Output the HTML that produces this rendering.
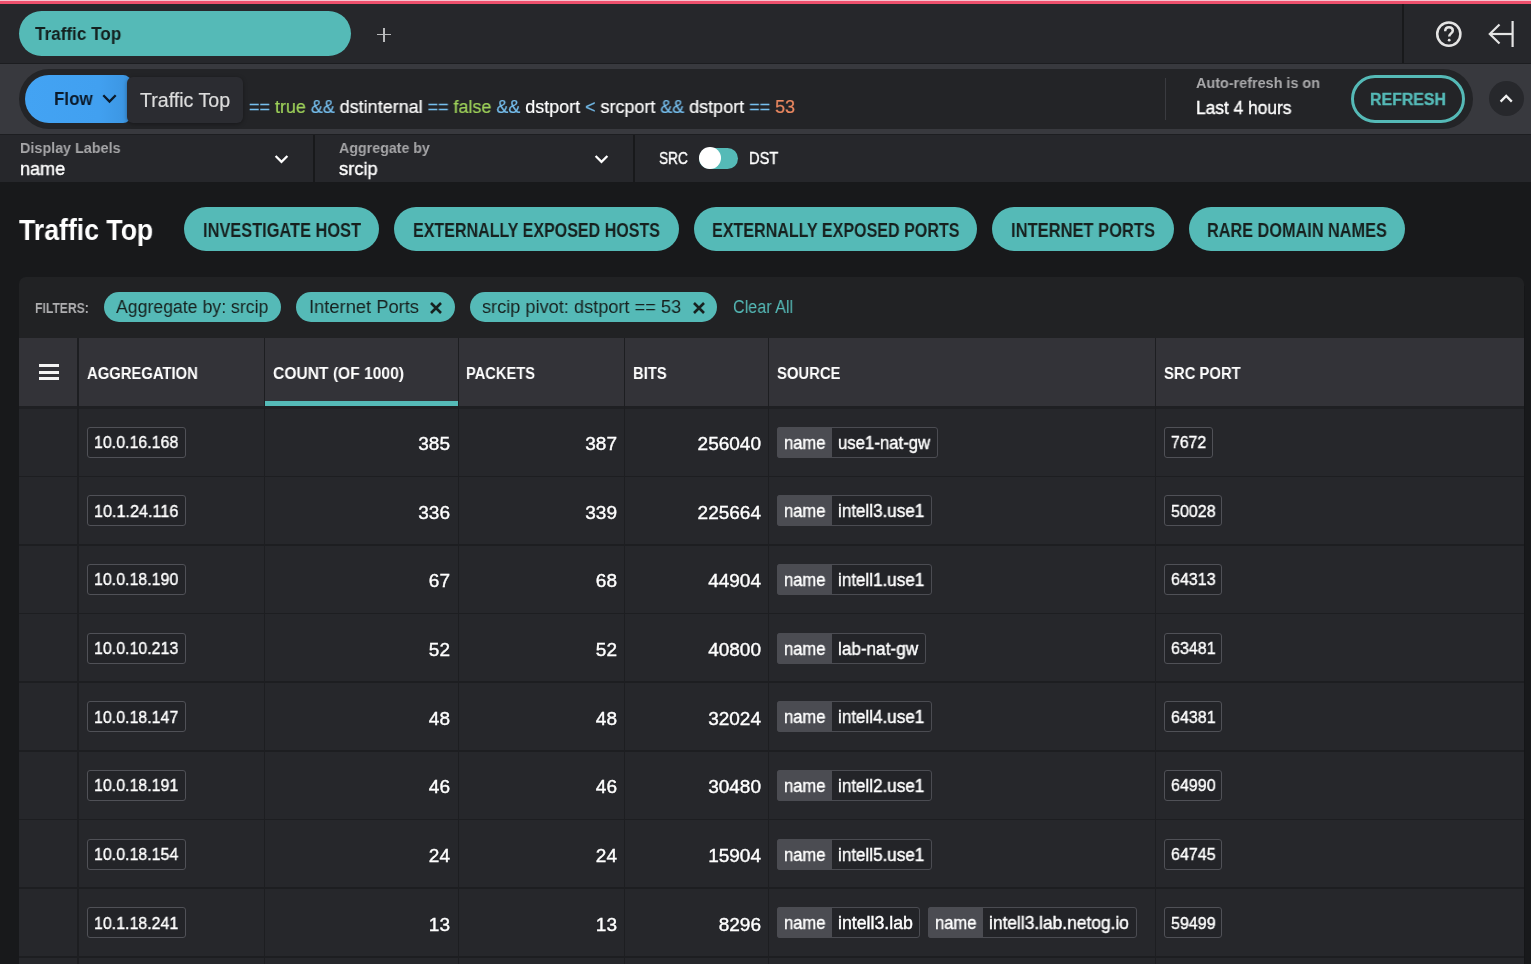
<!DOCTYPE html>
<html><head><meta charset="utf-8"><style>*{margin:0;padding:0}
html,body{width:1531px;height:964px;overflow:hidden;background:#18191b;font-family:"Liberation Sans", sans-serif}
.r{position:absolute;display:block}
.t{position:absolute;white-space:nowrap;line-height:1;transform-origin:0 0;will-change:transform}
.sb{-webkit-text-stroke:0.4px currentColor}
.sl{-webkit-text-stroke:0.2px currentColor}
</style></head><body>
<div class="r" style="left:0px;top:0px;width:1531px;height:62.5px;background:#26272b;"></div>
<div class="r" style="left:0px;top:0px;width:1531px;height:1.2px;background:#f7c3cf;"></div>
<div class="r" style="left:0px;top:1.2px;width:1531px;height:2.8px;background:#ee506d;"></div>
<div class="r" style="left:0px;top:62.5px;width:1531px;height:1.5px;background:#1c1d20;"></div>
<div class="r" style="left:1401.9px;top:4px;width:1.9px;height:58.5px;background:#18191b;"></div>
<div class="r" style="left:18.6px;top:10.7px;width:332.4px;height:45.3px;background:#55bab7;border-radius:23px;"></div>
<div class="r" style="left:377px;top:33.9px;width:13.5px;height:1.6px;background:#b9babc;"></div>
<div class="r" style="left:382.95px;top:28px;width:1.6px;height:13.6px;background:#b9babc;"></div>
<svg class="r" style="left:1434px;top:19px" width="30" height="30" viewBox="0 0 30 30"><circle cx="14.8" cy="15.1" r="11.6" fill="none" stroke="#e4e4e4" stroke-width="2.5"/><path d="M11.2 12.2 C11.2 9.6 13 8.3 15 8.3 C17.1 8.3 18.8 9.6 18.8 11.7 C18.8 14.2 15.2 14.6 15.2 17.4" fill="none" stroke="#e4e4e4" stroke-width="2.5" stroke-linecap="butt"/><circle cx="15.2" cy="21.2" r="1.4" fill="#e4e4e4"/></svg>
<svg class="r" style="left:1484px;top:18px" width="34" height="32" viewBox="0 0 34 32"><path d="M28.6 3 V29" stroke="#e4e4e4" stroke-width="2.2" fill="none"/><path d="M28 16 H6.5" stroke="#e4e4e4" stroke-width="2.2" fill="none"/><path d="M15.5 6.5 L5.8 16 L15.5 25.5" stroke="#e4e4e4" stroke-width="2.2" fill="none" stroke-linejoin="miter"/></svg>
<div class="r" style="left:0px;top:64px;width:1531px;height:70px;background:#38393e;"></div>
<div class="r" style="left:0px;top:134px;width:1531px;height:1.2px;background:#1d1e21;"></div>
<div class="r" style="left:19px;top:69px;width:1454px;height:60px;background:#232427;border-radius:30px;"></div>
<div class="r" style="left:24.7px;top:74.7px;width:106px;height:48.6px;background:linear-gradient(90deg,#43a3f3 0%,#41a0f0 70%,#3b94e0 100%);border-radius:24.3px 8px 8px 24.3px;"></div>
<svg class="r" style="left:100px;top:92px" width="20" height="14" viewBox="0 0 20 14"><path d="M3.3 3.3 L9.5 9.6 L15.7 3.3" stroke="#0b1a2a" stroke-width="2.3" fill="none"/></svg>
<div class="r" style="left:126.9px;top:77.3px;width:115.9px;height:45.5px;background:#2b2c31;border-radius:6px;box-shadow:0 1px 4px rgba(0,0,0,0.35);"></div>
<div class="r" style="left:1165px;top:78px;width:1.2px;height:42px;background:#3a3b40;"></div>
<div class="r" style="left:1350.9px;top:74.7px;width:114.3px;height:48.5px;background:transparent;border:3px solid #55bab7;border-radius:25px;box-sizing:border-box;"></div>
<div class="r" style="left:1488.6px;top:81.1px;width:35.2px;height:35.2px;background:#27282c;border-radius:50%;"></div>
<svg class="r" style="left:1496px;top:90px" width="20" height="16" viewBox="0 0 20 16"><path d="M4.6 11.6 L10.2 6 L15.8 11.6" stroke="#f0f0f0" stroke-width="2.3" fill="none"/></svg>
<div class="r" style="left:0px;top:135.2px;width:1531px;height:46.6px;background:#26272b;"></div>
<div class="r" style="left:313.1px;top:135.2px;width:1.6px;height:46.6px;background:#18191b;"></div>
<div class="r" style="left:633.1px;top:135.2px;width:1.6px;height:46.6px;background:#18191b;"></div>
<svg class="r" style="left:274.2px;top:151.5px" width="16" height="14" viewBox="0 0 16 14"><path d="M1.6 4 L7.5 9.9 L13.4 4" stroke="#ffffff" stroke-width="2.3" fill="none"/></svg>
<svg class="r" style="left:594.2px;top:151.5px" width="16" height="14" viewBox="0 0 16 14"><path d="M1.6 4 L7.5 9.9 L13.4 4" stroke="#ffffff" stroke-width="2.3" fill="none"/></svg>
<div class="r" style="left:699px;top:147.9px;width:39px;height:21.1px;background:#55bab7;border-radius:11px;"></div>
<div class="r" style="left:698.8px;top:147.1px;width:21.8px;height:21.8px;background:#ffffff;border-radius:50%;"></div>
<div class="r" style="left:184.1px;top:207.3px;width:194.7px;height:44.1px;background:#55bab7;border-radius:22px;"></div>
<div class="r" style="left:394px;top:207.3px;width:284.6px;height:44.1px;background:#55bab7;border-radius:22px;"></div>
<div class="r" style="left:693.5px;top:207.3px;width:283.3px;height:44.1px;background:#55bab7;border-radius:22px;"></div>
<div class="r" style="left:991.7px;top:207.3px;width:182.3px;height:44.1px;background:#55bab7;border-radius:22px;"></div>
<div class="r" style="left:1189px;top:207.3px;width:216px;height:44.1px;background:#55bab7;border-radius:22px;"></div>
<div class="r" style="left:19px;top:277px;width:1505px;height:700px;background:#212224;border-radius:7px 7px 0 0;"></div>
<div class="r" style="left:1523.6px;top:286px;width:1.4px;height:700px;background:#151618;"></div>
<div class="r" style="left:104px;top:292.2px;width:176.8px;height:29.6px;background:#55bab7;border-radius:15px;"></div>
<div class="r" style="left:296px;top:292.2px;width:158.9px;height:29.6px;background:#55bab7;border-radius:15px;"></div>
<svg class="r" style="left:429px;top:300.5px" width="14" height="14" viewBox="0 0 14 14"><path d="M2 2 L12 12 M12 2 L2 12" stroke="#17211f" stroke-width="2.6" fill="none"/></svg>
<div class="r" style="left:469.8px;top:292.2px;width:247.4px;height:29.6px;background:#55bab7;border-radius:15px;"></div>
<svg class="r" style="left:692.2px;top:300.5px" width="14" height="14" viewBox="0 0 14 14"><path d="M2 2 L12 12 M12 2 L2 12" stroke="#17211f" stroke-width="2.6" fill="none"/></svg>
<div class="r" style="left:19px;top:338px;width:1505px;height:68px;background:#333338;"></div>
<div class="r" style="left:19px;top:406px;width:1505px;height:2.8px;background:#1f2023;"></div>
<div class="r" style="left:264.9px;top:401.3px;width:192.8px;height:4.7px;background:#55bab7;"></div>
<div class="r" style="left:39.4px;top:363.9px;width:19.5px;height:3.1px;background:#f4f4f4;"></div>
<div class="r" style="left:39.4px;top:370.6px;width:19.5px;height:3.1px;background:#f4f4f4;"></div>
<div class="r" style="left:39.4px;top:377.2px;width:19.5px;height:3.1px;background:#f4f4f4;"></div>
<div class="r" style="left:19px;top:408.8px;width:1505px;height:600px;background:#26272b;"></div>
<div class="r" style="left:19px;top:475.5px;width:1505px;height:1.6px;background:#1d1e21;"></div>
<div class="r" style="left:19px;top:544.16px;width:1505px;height:1.6px;background:#1d1e21;"></div>
<div class="r" style="left:19px;top:612.82px;width:1505px;height:1.6px;background:#1d1e21;"></div>
<div class="r" style="left:19px;top:681.48px;width:1505px;height:1.6px;background:#1d1e21;"></div>
<div class="r" style="left:19px;top:750.14px;width:1505px;height:1.6px;background:#1d1e21;"></div>
<div class="r" style="left:19px;top:818.8px;width:1505px;height:1.6px;background:#1d1e21;"></div>
<div class="r" style="left:19px;top:887.46px;width:1505px;height:1.6px;background:#1d1e21;"></div>
<div class="r" style="left:19px;top:956.12px;width:1505px;height:1.6px;background:#1d1e21;"></div>
<div class="r" style="left:77.25px;top:338px;width:1.5px;height:626px;background:#1d1e21;"></div>
<div class="r" style="left:263.65px;top:338px;width:1.5px;height:626px;background:#1d1e21;"></div>
<div class="r" style="left:457.55px;top:338px;width:1.5px;height:626px;background:#1d1e21;"></div>
<div class="r" style="left:623.85px;top:338px;width:1.5px;height:626px;background:#1d1e21;"></div>
<div class="r" style="left:767.75px;top:338px;width:1.5px;height:626px;background:#1d1e21;"></div>
<div class="r" style="left:1154.55px;top:338px;width:1.5px;height:626px;background:#1d1e21;"></div>
<div class="r" style="left:87.2px;top:426.8px;width:98.8px;height:31px;background:#232428;border:1px solid #505157;border-radius:3px;box-sizing:border-box;"></div>
<div class="r" style="left:776.8px;top:426.8px;width:161.0px;height:30.8px;background:#232428;border:1px solid #4b4c52;border-radius:3px;box-sizing:border-box;"></div>
<div class="r" style="left:776.8px;top:426.8px;width:54.9px;height:30.8px;background:#4b4c52;border-radius:3px 0 0 3px;"></div>
<div class="r" style="left:1164.4px;top:426.8px;width:48.5px;height:31px;background:#232428;border:1px solid #505157;border-radius:3px;box-sizing:border-box;"></div>
<div class="r" style="left:87.2px;top:495.47px;width:98.8px;height:31px;background:#232428;border:1px solid #505157;border-radius:3px;box-sizing:border-box;"></div>
<div class="r" style="left:776.8px;top:495.47px;width:155.0px;height:30.8px;background:#232428;border:1px solid #4b4c52;border-radius:3px;box-sizing:border-box;"></div>
<div class="r" style="left:776.8px;top:495.47px;width:54.9px;height:30.8px;background:#4b4c52;border-radius:3px 0 0 3px;"></div>
<div class="r" style="left:1164.4px;top:495.47px;width:57.9px;height:31px;background:#232428;border:1px solid #505157;border-radius:3px;box-sizing:border-box;"></div>
<div class="r" style="left:87.2px;top:564.14px;width:98.8px;height:31px;background:#232428;border:1px solid #505157;border-radius:3px;box-sizing:border-box;"></div>
<div class="r" style="left:776.8px;top:564.14px;width:155.0px;height:30.8px;background:#232428;border:1px solid #4b4c52;border-radius:3px;box-sizing:border-box;"></div>
<div class="r" style="left:776.8px;top:564.14px;width:54.9px;height:30.8px;background:#4b4c52;border-radius:3px 0 0 3px;"></div>
<div class="r" style="left:1164.4px;top:564.14px;width:57.9px;height:31px;background:#232428;border:1px solid #505157;border-radius:3px;box-sizing:border-box;"></div>
<div class="r" style="left:87.2px;top:632.81px;width:98.8px;height:31px;background:#232428;border:1px solid #505157;border-radius:3px;box-sizing:border-box;"></div>
<div class="r" style="left:776.8px;top:632.81px;width:148.9px;height:30.8px;background:#232428;border:1px solid #4b4c52;border-radius:3px;box-sizing:border-box;"></div>
<div class="r" style="left:776.8px;top:632.81px;width:54.9px;height:30.8px;background:#4b4c52;border-radius:3px 0 0 3px;"></div>
<div class="r" style="left:1164.4px;top:632.81px;width:57.9px;height:31px;background:#232428;border:1px solid #505157;border-radius:3px;box-sizing:border-box;"></div>
<div class="r" style="left:87.2px;top:701.48px;width:98.8px;height:31px;background:#232428;border:1px solid #505157;border-radius:3px;box-sizing:border-box;"></div>
<div class="r" style="left:776.8px;top:701.48px;width:155.0px;height:30.8px;background:#232428;border:1px solid #4b4c52;border-radius:3px;box-sizing:border-box;"></div>
<div class="r" style="left:776.8px;top:701.48px;width:54.9px;height:30.8px;background:#4b4c52;border-radius:3px 0 0 3px;"></div>
<div class="r" style="left:1164.4px;top:701.48px;width:57.9px;height:31px;background:#232428;border:1px solid #505157;border-radius:3px;box-sizing:border-box;"></div>
<div class="r" style="left:87.2px;top:770.15px;width:98.8px;height:31px;background:#232428;border:1px solid #505157;border-radius:3px;box-sizing:border-box;"></div>
<div class="r" style="left:776.8px;top:770.15px;width:155.0px;height:30.8px;background:#232428;border:1px solid #4b4c52;border-radius:3px;box-sizing:border-box;"></div>
<div class="r" style="left:776.8px;top:770.15px;width:54.9px;height:30.8px;background:#4b4c52;border-radius:3px 0 0 3px;"></div>
<div class="r" style="left:1164.4px;top:770.15px;width:57.9px;height:31px;background:#232428;border:1px solid #505157;border-radius:3px;box-sizing:border-box;"></div>
<div class="r" style="left:87.2px;top:838.82px;width:98.8px;height:31px;background:#232428;border:1px solid #505157;border-radius:3px;box-sizing:border-box;"></div>
<div class="r" style="left:776.8px;top:838.82px;width:155.0px;height:30.8px;background:#232428;border:1px solid #4b4c52;border-radius:3px;box-sizing:border-box;"></div>
<div class="r" style="left:776.8px;top:838.82px;width:54.9px;height:30.8px;background:#4b4c52;border-radius:3px 0 0 3px;"></div>
<div class="r" style="left:1164.4px;top:838.82px;width:57.9px;height:31px;background:#232428;border:1px solid #505157;border-radius:3px;box-sizing:border-box;"></div>
<div class="r" style="left:87.2px;top:907.49px;width:98.8px;height:31px;background:#232428;border:1px solid #505157;border-radius:3px;box-sizing:border-box;"></div>
<div class="r" style="left:776.8px;top:907.49px;width:143.7px;height:30.8px;background:#232428;border:1px solid #4b4c52;border-radius:3px;box-sizing:border-box;"></div>
<div class="r" style="left:776.8px;top:907.49px;width:54.9px;height:30.8px;background:#4b4c52;border-radius:3px 0 0 3px;"></div>
<div class="r" style="left:927.8999999999999px;top:907.49px;width:208.7px;height:30.8px;background:#232428;border:1px solid #4b4c52;border-radius:3px;box-sizing:border-box;"></div>
<div class="r" style="left:927.8999999999999px;top:907.49px;width:54.9px;height:30.8px;background:#4b4c52;border-radius:3px 0 0 3px;"></div>
<div class="r" style="left:1164.4px;top:907.49px;width:57.9px;height:31px;background:#232428;border:1px solid #505157;border-radius:3px;box-sizing:border-box;"></div>
<div class="t" id="t0" style="top:25.30px;font-size:18.3px;font-weight:700;color:#14201f;left:34.8px;transform:scaleX(0.9360);">Traffic Top</div>
<div class="t" id="t1" style="top:90.00px;font-size:18.2px;font-weight:700;color:#0b1a2a;left:53.7px;transform:scaleX(0.9343);">Flow</div>
<div class="t sl" id="t2" style="top:91.10px;font-size:19.5px;font-weight:400;color:#dcdcdc;left:139.6px;transform:scaleX(1.0055);">Traffic Top</div>
<div class="t" id="t3" style="top:76.30px;font-size:14.6px;font-weight:700;color:#a9a9ab;left:1196.3px;transform:scaleX(0.9866);">Auto-refresh is on</div>
<div class="t sb" id="t4" style="top:98.50px;font-size:18px;font-weight:400;color:#ffffff;left:1196.3px;transform:scaleX(0.9640);">Last 4 hours</div>
<div class="t sb" id="t5" style="top:90.90px;font-size:17.2px;font-weight:700;color:#55bab7;left:1369.9px;transform:scaleX(0.9240);">REFRESH</div>
<div class="t sl" id="t6" style="top:97.80px;font-size:18px;font-weight:400;color:#ffffff;left:249.3px;transform:scaleX(0.9964);"><span style="color:#76bfee">==</span> <span style="color:#9fd35a">true</span> <span style="color:#76bfee">&amp;&amp;</span> dstinternal <span style="color:#76bfee">==</span> <span style="color:#9fd35a">false</span> <span style="color:#76bfee">&amp;&amp;</span> dstport <span style="color:#76bfee">&lt;</span> srcport <span style="color:#76bfee">&amp;&amp;</span> dstport <span style="color:#76bfee">==</span> <span style="color:#ee8a62">53</span></div>
<div class="t" id="t7" style="top:140.00px;font-size:15.2px;font-weight:700;color:#a6a6a8;left:19.5px;transform:scaleX(0.9449);">Display Labels</div>
<div class="t sb" id="t8" style="top:160.00px;font-size:18.5px;font-weight:400;color:#ffffff;left:19.8px;transform:scaleX(0.9766);">name</div>
<div class="t" id="t9" style="top:140.00px;font-size:15.2px;font-weight:700;color:#a6a6a8;left:338.8px;transform:scaleX(0.9365);">Aggregate by</div>
<div class="t sb" id="t10" style="top:160.00px;font-size:18.5px;font-weight:400;color:#ffffff;left:338.8px;transform:scaleX(0.9882);">srcip</div>
<div class="t sb" id="t11" style="top:149.80px;font-size:16.2px;font-weight:400;color:#ffffff;left:658.6px;transform:scaleX(0.8424);">SRC</div>
<div class="t sb" id="t12" style="top:149.80px;font-size:16.2px;font-weight:400;color:#ffffff;left:748.5px;transform:scaleX(0.9019);">DST</div>
<div class="t" id="t13" style="top:216.30px;font-size:29px;font-weight:700;color:#ffffff;left:19.3px;transform:scaleX(0.9187);">Traffic Top</div>
<div class="t" id="t14" style="top:220.60px;font-size:19.4px;font-weight:700;color:#17211f;left:202.5px;transform:scaleX(0.8444);">INVESTIGATE HOST</div>
<div class="t" id="t15" style="top:220.60px;font-size:19.4px;font-weight:700;color:#17211f;left:413.4px;transform:scaleX(0.8272);">EXTERNALLY EXPOSED HOSTS</div>
<div class="t" id="t16" style="top:220.60px;font-size:19.4px;font-weight:700;color:#17211f;left:711.9px;transform:scaleX(0.8292);">EXTERNALLY EXPOSED PORTS</div>
<div class="t" id="t17" style="top:220.60px;font-size:19.4px;font-weight:700;color:#17211f;left:1011px;transform:scaleX(0.8514);">INTERNET PORTS</div>
<div class="t" id="t18" style="top:220.60px;font-size:19.4px;font-weight:700;color:#17211f;left:1206.8px;transform:scaleX(0.8387);">RARE DOMAIN NAMES</div>
<div class="t" id="t19" style="top:301.20px;font-size:14.3px;font-weight:700;color:#aeaeb0;left:34.5px;transform:scaleX(0.8502);">FILTERS:</div>
<div class="t" id="t20" style="top:297.20px;font-size:19.2px;font-weight:400;color:#17211f;left:115.6px;transform:scaleX(0.9212);">Aggregate by: srcip</div>
<div class="t" id="t21" style="top:297.20px;font-size:19.2px;font-weight:400;color:#17211f;left:308.7px;transform:scaleX(0.9550);">Internet Ports</div>
<div class="t" id="t22" style="top:297.20px;font-size:19.2px;font-weight:400;color:#17211f;left:482.2px;transform:scaleX(0.9476);">srcip pivot: dstport == 53</div>
<div class="t" id="t23" style="top:299.20px;font-size:17.6px;font-weight:400;color:#55bab7;left:732.9px;transform:scaleX(0.9173);">Clear All</div>
<div class="t" id="t24" style="top:365.00px;font-size:17.2px;font-weight:700;color:#ffffff;left:86.7px;transform:scaleX(0.8616);">AGGREGATION</div>
<div class="t" id="t25" style="top:365.00px;font-size:17.2px;font-weight:700;color:#ffffff;left:273px;transform:scaleX(0.9083);">COUNT (OF 1000)</div>
<div class="t" id="t26" style="top:365.00px;font-size:17.2px;font-weight:700;color:#ffffff;left:466.3px;transform:scaleX(0.8521);">PACKETS</div>
<div class="t" id="t27" style="top:365.00px;font-size:17.2px;font-weight:700;color:#ffffff;left:633.3px;transform:scaleX(0.8581);">BITS</div>
<div class="t" id="t28" style="top:365.00px;font-size:17.2px;font-weight:700;color:#ffffff;left:776.7px;transform:scaleX(0.8634);">SOURCE</div>
<div class="t" id="t29" style="top:365.00px;font-size:17.2px;font-weight:700;color:#ffffff;left:1163.7px;transform:scaleX(0.8636);">SRC PORT</div>
<div class="t sb" id="t30" style="top:434.00px;font-size:17.4px;font-weight:400;color:#ffffff;left:94px;transform:scaleX(0.9176);">10.0.16.168</div>
<div class="t sb" id="t31" style="top:434.00px;font-size:19px;font-weight:400;color:#ffffff;left:450.3px;transform:translateX(-100%);">385</div>
<div class="t sb" id="t32" style="top:434.00px;font-size:19px;font-weight:400;color:#ffffff;left:616.5px;transform:translateX(-100%);">387</div>
<div class="t sb" id="t33" style="top:434.00px;font-size:19px;font-weight:400;color:#ffffff;left:761px;transform:translateX(-100%);">256040</div>
<div class="t sb" id="t34" style="top:434.50px;font-size:17.6px;font-weight:400;color:#ffffff;left:784.0999999999999px;transform:scaleX(0.9406);">name</div>
<div class="t sb" id="t35" style="top:434.50px;font-size:17.6px;font-weight:400;color:#ffffff;left:838.3px;transform:scaleX(0.9522);">use1-nat-gw</div>
<div class="t sb" id="t36" style="top:434.00px;font-size:17.4px;font-weight:400;color:#ffffff;left:1171px;transform:scaleX(0.9099);">7672</div>
<div class="t sb" id="t37" style="top:502.67px;font-size:17.4px;font-weight:400;color:#ffffff;left:94px;transform:scaleX(0.9305);">10.1.24.116</div>
<div class="t sb" id="t38" style="top:502.67px;font-size:19px;font-weight:400;color:#ffffff;left:450.3px;transform:translateX(-100%);">336</div>
<div class="t sb" id="t39" style="top:502.67px;font-size:19px;font-weight:400;color:#ffffff;left:616.5px;transform:translateX(-100%);">339</div>
<div class="t sb" id="t40" style="top:502.67px;font-size:19px;font-weight:400;color:#ffffff;left:761px;transform:translateX(-100%);">225664</div>
<div class="t sb" id="t41" style="top:503.17px;font-size:17.6px;font-weight:400;color:#ffffff;left:784.0999999999999px;transform:scaleX(0.9406);">name</div>
<div class="t sb" id="t42" style="top:503.17px;font-size:17.6px;font-weight:400;color:#ffffff;left:838.3px;transform:scaleX(0.9684);">intell3.use1</div>
<div class="t sb" id="t43" style="top:502.67px;font-size:17.4px;font-weight:400;color:#ffffff;left:1171px;transform:scaleX(0.9223);">50028</div>
<div class="t sb" id="t44" style="top:571.34px;font-size:17.4px;font-weight:400;color:#ffffff;left:94px;transform:scaleX(0.9176);">10.0.18.190</div>
<div class="t sb" id="t45" style="top:571.34px;font-size:19px;font-weight:400;color:#ffffff;left:450.3px;transform:translateX(-100%);">67</div>
<div class="t sb" id="t46" style="top:571.34px;font-size:19px;font-weight:400;color:#ffffff;left:616.5px;transform:translateX(-100%);">68</div>
<div class="t sb" id="t47" style="top:571.34px;font-size:19px;font-weight:400;color:#ffffff;left:761px;transform:translateX(-100%);">44904</div>
<div class="t sb" id="t48" style="top:571.84px;font-size:17.6px;font-weight:400;color:#ffffff;left:784.0999999999999px;transform:scaleX(0.9406);">name</div>
<div class="t sb" id="t49" style="top:571.84px;font-size:17.6px;font-weight:400;color:#ffffff;left:838.3px;transform:scaleX(0.9684);">intell1.use1</div>
<div class="t sb" id="t50" style="top:571.34px;font-size:17.4px;font-weight:400;color:#ffffff;left:1171px;transform:scaleX(0.9223);">64313</div>
<div class="t sb" id="t51" style="top:640.01px;font-size:17.4px;font-weight:400;color:#ffffff;left:94px;transform:scaleX(0.9176);">10.0.10.213</div>
<div class="t sb" id="t52" style="top:640.01px;font-size:19px;font-weight:400;color:#ffffff;left:450.3px;transform:translateX(-100%);">52</div>
<div class="t sb" id="t53" style="top:640.01px;font-size:19px;font-weight:400;color:#ffffff;left:616.5px;transform:translateX(-100%);">52</div>
<div class="t sb" id="t54" style="top:640.01px;font-size:19px;font-weight:400;color:#ffffff;left:761px;transform:translateX(-100%);">40800</div>
<div class="t sb" id="t55" style="top:640.51px;font-size:17.6px;font-weight:400;color:#ffffff;left:784.0999999999999px;transform:scaleX(0.9406);">name</div>
<div class="t sb" id="t56" style="top:640.51px;font-size:17.6px;font-weight:400;color:#ffffff;left:838.3px;transform:scaleX(0.9750);">lab-nat-gw</div>
<div class="t sb" id="t57" style="top:640.01px;font-size:17.4px;font-weight:400;color:#ffffff;left:1171px;transform:scaleX(0.9223);">63481</div>
<div class="t sb" id="t58" style="top:708.68px;font-size:17.4px;font-weight:400;color:#ffffff;left:94px;transform:scaleX(0.9176);">10.0.18.147</div>
<div class="t sb" id="t59" style="top:708.68px;font-size:19px;font-weight:400;color:#ffffff;left:450.3px;transform:translateX(-100%);">48</div>
<div class="t sb" id="t60" style="top:708.68px;font-size:19px;font-weight:400;color:#ffffff;left:616.5px;transform:translateX(-100%);">48</div>
<div class="t sb" id="t61" style="top:708.68px;font-size:19px;font-weight:400;color:#ffffff;left:761px;transform:translateX(-100%);">32024</div>
<div class="t sb" id="t62" style="top:709.18px;font-size:17.6px;font-weight:400;color:#ffffff;left:784.0999999999999px;transform:scaleX(0.9406);">name</div>
<div class="t sb" id="t63" style="top:709.18px;font-size:17.6px;font-weight:400;color:#ffffff;left:838.3px;transform:scaleX(0.9684);">intell4.use1</div>
<div class="t sb" id="t64" style="top:708.68px;font-size:17.4px;font-weight:400;color:#ffffff;left:1171px;transform:scaleX(0.9223);">64381</div>
<div class="t sb" id="t65" style="top:777.35px;font-size:17.4px;font-weight:400;color:#ffffff;left:94px;transform:scaleX(0.9176);">10.0.18.191</div>
<div class="t sb" id="t66" style="top:777.35px;font-size:19px;font-weight:400;color:#ffffff;left:450.3px;transform:translateX(-100%);">46</div>
<div class="t sb" id="t67" style="top:777.35px;font-size:19px;font-weight:400;color:#ffffff;left:616.5px;transform:translateX(-100%);">46</div>
<div class="t sb" id="t68" style="top:777.35px;font-size:19px;font-weight:400;color:#ffffff;left:761px;transform:translateX(-100%);">30480</div>
<div class="t sb" id="t69" style="top:777.85px;font-size:17.6px;font-weight:400;color:#ffffff;left:784.0999999999999px;transform:scaleX(0.9406);">name</div>
<div class="t sb" id="t70" style="top:777.85px;font-size:17.6px;font-weight:400;color:#ffffff;left:838.3px;transform:scaleX(0.9684);">intell2.use1</div>
<div class="t sb" id="t71" style="top:777.35px;font-size:17.4px;font-weight:400;color:#ffffff;left:1171px;transform:scaleX(0.9223);">64990</div>
<div class="t sb" id="t72" style="top:846.02px;font-size:17.4px;font-weight:400;color:#ffffff;left:94px;transform:scaleX(0.9176);">10.0.18.154</div>
<div class="t sb" id="t73" style="top:846.02px;font-size:19px;font-weight:400;color:#ffffff;left:450.3px;transform:translateX(-100%);">24</div>
<div class="t sb" id="t74" style="top:846.02px;font-size:19px;font-weight:400;color:#ffffff;left:616.5px;transform:translateX(-100%);">24</div>
<div class="t sb" id="t75" style="top:846.02px;font-size:19px;font-weight:400;color:#ffffff;left:761px;transform:translateX(-100%);">15904</div>
<div class="t sb" id="t76" style="top:846.52px;font-size:17.6px;font-weight:400;color:#ffffff;left:784.0999999999999px;transform:scaleX(0.9406);">name</div>
<div class="t sb" id="t77" style="top:846.52px;font-size:17.6px;font-weight:400;color:#ffffff;left:838.3px;transform:scaleX(0.9684);">intell5.use1</div>
<div class="t sb" id="t78" style="top:846.02px;font-size:17.4px;font-weight:400;color:#ffffff;left:1171px;transform:scaleX(0.9223);">64745</div>
<div class="t sb" id="t79" style="top:914.69px;font-size:17.4px;font-weight:400;color:#ffffff;left:94px;transform:scaleX(0.9176);">10.1.18.241</div>
<div class="t sb" id="t80" style="top:914.69px;font-size:19px;font-weight:400;color:#ffffff;left:450.3px;transform:translateX(-100%);">13</div>
<div class="t sb" id="t81" style="top:914.69px;font-size:19px;font-weight:400;color:#ffffff;left:616.5px;transform:translateX(-100%);">13</div>
<div class="t sb" id="t82" style="top:914.69px;font-size:19px;font-weight:400;color:#ffffff;left:761px;transform:translateX(-100%);">8296</div>
<div class="t sb" id="t83" style="top:915.19px;font-size:17.6px;font-weight:400;color:#ffffff;left:784.0999999999999px;transform:scaleX(0.9406);">name</div>
<div class="t sb" id="t84" style="top:915.19px;font-size:17.6px;font-weight:400;color:#ffffff;left:838.3px;transform:scaleX(1.0075);">intell3.lab</div>
<div class="t sb" id="t85" style="top:915.19px;font-size:17.6px;font-weight:400;color:#ffffff;left:935.1999999999998px;transform:scaleX(0.9406);">name</div>
<div class="t sb" id="t86" style="top:915.19px;font-size:17.6px;font-weight:400;color:#ffffff;left:989.3999999999999px;transform:scaleX(0.9863);">intell3.lab.netog.io</div>
<div class="t sb" id="t87" style="top:914.69px;font-size:17.4px;font-weight:400;color:#ffffff;left:1171px;transform:scaleX(0.9223);">59499</div>
</body></html>
